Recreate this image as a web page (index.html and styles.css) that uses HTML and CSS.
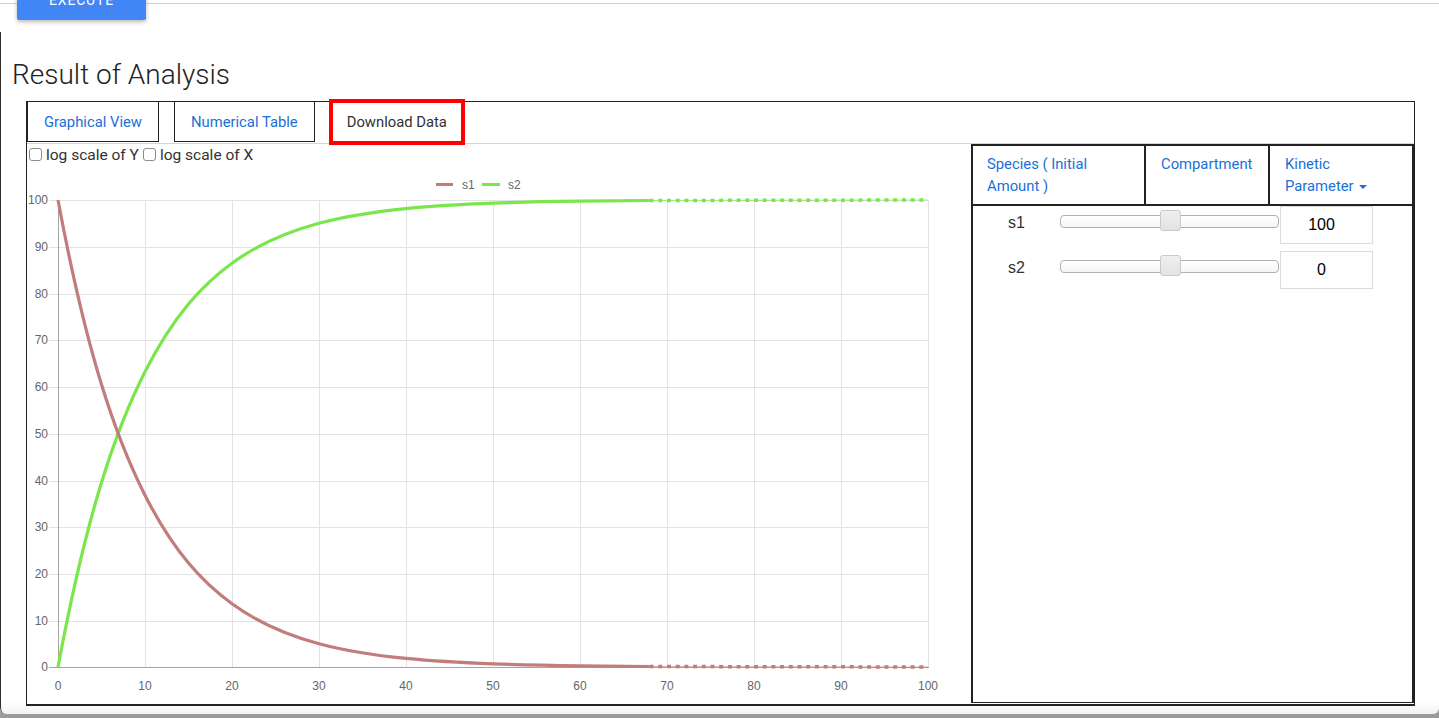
FILE: index.html
```html
<!DOCTYPE html>
<html lang="en">
<head>
<meta charset="utf-8">
<title>Result of Analysis</title>
<link rel="stylesheet" href="styles.css">
</head>
<body>
<div class="window">
  <div class="topline"></div>
  <button class="exec" type="button">Execute</button>
  <section class="result">
    <h2 class="title">Result of Analysis</h2>
    <div class="analysis">
      <nav class="tabs">
        <a class="tab">Graphical View</a>
        <a class="tab">Numerical Table</a>
        <a class="tab tab-current">Download Data</a>
      </nav>
      <div class="content">
        <div class="chart-col">
          <div class="opts">
            <label class="opt"><input type="checkbox" class="check">log scale of Y</label>
            <label class="opt"><input type="checkbox" class="check">log scale of X</label>
          </div>
          <svg class="chart" width="944" height="539" viewBox="27 165 944 539" xmlns="http://www.w3.org/2000/svg">
            <g class="grid">
              <line x1="49" y1="200.5" x2="928" y2="200.5"/>
              <line x1="49" y1="247.5" x2="928" y2="247.5"/>
              <line x1="49" y1="294.5" x2="928" y2="294.5"/>
              <line x1="49" y1="340.5" x2="928" y2="340.5"/>
              <line x1="49" y1="387.5" x2="928" y2="387.5"/>
              <line x1="49" y1="434.5" x2="928" y2="434.5"/>
              <line x1="49" y1="481.5" x2="928" y2="481.5"/>
              <line x1="49" y1="527.5" x2="928" y2="527.5"/>
              <line x1="49" y1="574.5" x2="928" y2="574.5"/>
              <line x1="49" y1="621.5" x2="928" y2="621.5"/>
              <line x1="145.5" y1="200" x2="145.5" y2="667"/>
              <line x1="232.5" y1="200" x2="232.5" y2="667"/>
              <line x1="319.5" y1="200" x2="319.5" y2="667"/>
              <line x1="406.5" y1="200" x2="406.5" y2="667"/>
              <line x1="493.5" y1="200" x2="493.5" y2="667"/>
              <line x1="580.5" y1="200" x2="580.5" y2="667"/>
              <line x1="667.5" y1="200" x2="667.5" y2="667"/>
              <line x1="754.5" y1="200" x2="754.5" y2="667"/>
              <line x1="841.5" y1="200" x2="841.5" y2="667"/>
              <line x1="928.5" y1="200" x2="928.5" y2="667"/>
            </g>
            <g class="axis">
              <line x1="58.5" y1="200" x2="58.5" y2="668"/>
              <line x1="49" y1="667.5" x2="929" y2="667.5"/>
            </g>
            <g class="ylabels">
              <text x="48" y="204">100</text>
              <text x="48" y="251">90</text>
              <text x="48" y="298">80</text>
              <text x="48" y="344">70</text>
              <text x="48" y="391">60</text>
              <text x="48" y="438">50</text>
              <text x="48" y="485">40</text>
              <text x="48" y="531">30</text>
              <text x="48" y="578">20</text>
              <text x="48" y="625">10</text>
              <text x="48" y="671">0</text>
            </g>
            <g class="xlabels">
              <text x="58" y="690">0</text>
              <text x="145" y="690">10</text>
              <text x="232" y="690">20</text>
              <text x="319" y="690">30</text>
              <text x="406" y="690">40</text>
              <text x="493" y="690">50</text>
              <text x="580" y="690">60</text>
              <text x="667" y="690">70</text>
              <text x="754" y="690">80</text>
              <text x="841" y="690">90</text>
              <text x="928" y="690">100</text>
            </g>
            <g class="legend">
              <rect class="fill-s1" x="436" y="183" width="17" height="3"/>
              <text x="462" y="189">s1</text>
              <rect class="fill-s2" x="482" y="183" width="18" height="3"/>
              <text x="508" y="189">s2</text>
            </g>
            <path class="line s2" d="M58,667 C86.99,511.35 116.03,429.06 145,371.81 C173.99,314.56 203.03,284.25 232,263.19 C260.97,242.12 290.03,231.01 319,223.26 C347.97,215.5 377.03,211.39 406,208.55 C434.97,205.7 464.03,204.2 493,203.13 C521.97,202.1 551.03,201.54 580,201.17 L649.6,200.5"/>
            <path class="thin s2" d="M649.6,200.5 L928,200"/>
            <path class="dots s2" d="M649.6,200.5 L928,200"/>
            <path class="line s1" d="M58,200 C86.99,355.65 116.03,437.94 145,495.19 C173.99,552.45 203.03,582.75 232,603.81 C260.97,624.88 290.03,635.99 319,643.74 C347.97,651.5 377.03,655.61 406,658.45 C434.97,661.3 464.03,662.8 493,663.87 C521.97,664.9 551.03,665.46 580,665.83 L649.6,666.5"/>
            <path class="thin s1" d="M649.6,666.5 L928,667"/>
            <path class="dots s1" d="M649.6,666.5 L928,667"/>
          </svg>
        </div>
        <aside class="panel">
          <div class="panel-head">
            <a class="cell cell-species">Species ( Initial Amount )</a>
            <a class="cell cell-comp">Compartment</a>
            <a class="cell cell-kin">Kinetic Parameter <span class="caret"></span></a>
          </div>
          <div class="rows">
            <div class="row">
              <span class="name">s1</span>
              <div class="slider"><span class="thumb"></span></div>
              <input class="value" type="text" value="100">
            </div>
            <div class="row">
              <span class="name">s2</span>
              <div class="slider"><span class="thumb"></span></div>
              <input class="value" type="text" value="0">
            </div>
          </div>
        </aside>
      </div>
    </div>
  </section>
</div>
<div class="backdrop"></div>
</body>
</html>
```

FILE: styles.css
```css
html, body {
  margin: 0;
  padding: 0;
  overflow: hidden;
}

body {
  background: #9b9b9b;
  font-family: Roboto, "Liberation Sans", sans-serif;
  color: #333;
}

.window {
  height: 714px;
  background: linear-gradient(#ffffff 0, #ffffff 700px, #f3f3f3 714px);
  display: flex;
  flex-direction: column;
  border-bottom-left-radius: 6px;
  border-bottom-right-radius: 6px;
  overflow: hidden;
}

.topline {
  flex: none;
  margin-top: 3px;
  border-top: 1px solid #cfcfcf;
}

.exec {
  flex: none;
  align-self: flex-start;
  margin: -24px 0 0 17px;
  width: 129px;
  height: 40px;
  border: none;
  border-radius: 2px;
  background: #4285f4;
  color: #fff;
  font: 400 14px Roboto, "Liberation Sans", sans-serif;
  letter-spacing: 0.8px;
  text-transform: uppercase;
  box-shadow: 0 2px 4px rgba(0, 0, 0, 0.28);
}

.result {
  flex: 1;
  margin-top: 12px;
  padding-top: 26px;
  border-left: 1px solid #2d2d2d;
  border-bottom-left-radius: 6px;
}

.title {
  margin: 0 0 0 11px;
  font: 300 28px/34px Roboto, "Liberation Sans", sans-serif;
  color: #222;
}

.analysis {
  margin: 9px 0 0 25px;
  width: 1387px;
  border: 1px solid #222;
  border-bottom-width: 2px;
  background: #fff;
}

.tabs {
  display: flex;
  height: 41px;
  border-bottom: 1px solid #d5d5d5;
  gap: 15px;
}

.tab {
  box-sizing: border-box;
  height: 40px;
  display: flex;
  align-items: center;
  padding: 0 16px;
  border: 1px solid #222;
  border-top: none;
  font-size: 14.8px;
  color: #1a6fd8;
  text-decoration: none;
  cursor: pointer;
}

.tab-current {
  margin-left: 2px;
  border-color: transparent;
  color: #333;
  padding: 0 14px;
  outline: 4px solid #f00;
  outline-offset: -1px;
}

.content {
  display: flex;
  height: 560px;
}

.chart-col {
  width: 944px;
  display: flex;
  flex-direction: column;
}

.opts {
  height: 21px;
  display: flex;
  align-items: center;
  padding-left: 2px;
  font-size: 15.5px;
  color: #333;
}

.opt {
  display: flex;
  align-items: center;
  margin-right: 4px;
}

.check {
  appearance: none;
  -webkit-appearance: none;
  width: 13px;
  height: 13px;
  margin: 0 4px 0 0;
  border: 1px solid #8c8c8c;
  border-radius: 3px;
  background: #fff;
}

.chart {
  display: block;
}

.grid line {
  stroke: #e3e3e3;
  stroke-width: 1;
}

.axis line {
  stroke: #a5a5a5;
  stroke-width: 1;
}

.ylabels text,
.xlabels text,
.legend text {
  font: 12px "Liberation Sans", Arial, sans-serif;
  fill: #666;
}

.ylabels text {
  text-anchor: end;
}

.xlabels text {
  text-anchor: middle;
}

.fill-s1 { fill: #c27c7c; }
.fill-s2 { fill: #7be64c; }

.line,
.thin,
.dots {
  fill: none;
  stroke-linejoin: round;
}

.line { stroke-width: 3.2; }
.thin { stroke-width: 1; opacity: 0.6; }
.dots { stroke-width: 3.5; stroke-dasharray: 4 4.7; }

.s1 { stroke: #c27c7c; }
.s2 { stroke: #7be64c; }

.panel {
  box-sizing: border-box;
  width: 443px;
  margin-bottom: 1px;
  border: 2px solid #222;
  border-bottom-width: 1px;
  background: #fff;
}

.panel-head {
  display: flex;
  height: 58px;
  border-bottom: 2px solid #222;
}

.cell {
  box-sizing: border-box;
  padding: 7px 15px 0;
  line-height: 22px;
  font-size: 14.8px;
  color: #1a6fd8;
  border-right: 2px solid #222;
  text-decoration: none;
  cursor: pointer;
}

.cell-species {
  width: 173px;
  padding-left: 14px;
}

.cell-comp {
  width: 124px;
}

.cell-kin {
  flex: 1;
  border-right: none;
}

.caret {
  display: inline-block;
  width: 0;
  height: 0;
  margin-left: 2px;
  vertical-align: middle;
  border-top: 4px solid #1a6fd8;
  border-left: 4px solid transparent;
  border-right: 4px solid transparent;
}

.rows {
  display: flex;
  flex-direction: column;
  gap: 7px;
}

.row {
  display: grid;
  grid-template-columns: 87px 220px 93px;
  height: 38px;
}

.name {
  text-align: center;
  font: 16px/33px "Liberation Sans", Arial, sans-serif;
  color: #333;
}

.slider {
  position: relative;
  box-sizing: border-box;
  width: 219px;
  height: 13px;
  margin-top: 9px;
  border: 1px solid #b0b0b0;
  border-radius: 4px;
  background: linear-gradient(#ffffff, #f5f5f5);
}

.thumb {
  position: absolute;
  left: 99px;
  top: -6px;
  box-sizing: border-box;
  width: 21px;
  height: 21px;
  border: 1px solid #cacaca;
  border-radius: 3px;
  background: linear-gradient(#efefef, #e3e3e3);
}

.value {
  box-sizing: border-box;
  width: 93px;
  height: 38px;
  margin: 0;
  padding: 0 10px 0 0;
  border: 1px solid #dcdcdc;
  text-align: center;
  font: 16px "Liberation Sans", Arial, sans-serif;
  color: #000;
  background: #fff;
}

.backdrop {
  height: 4px;
  background: #9b9b9b;
}
```
